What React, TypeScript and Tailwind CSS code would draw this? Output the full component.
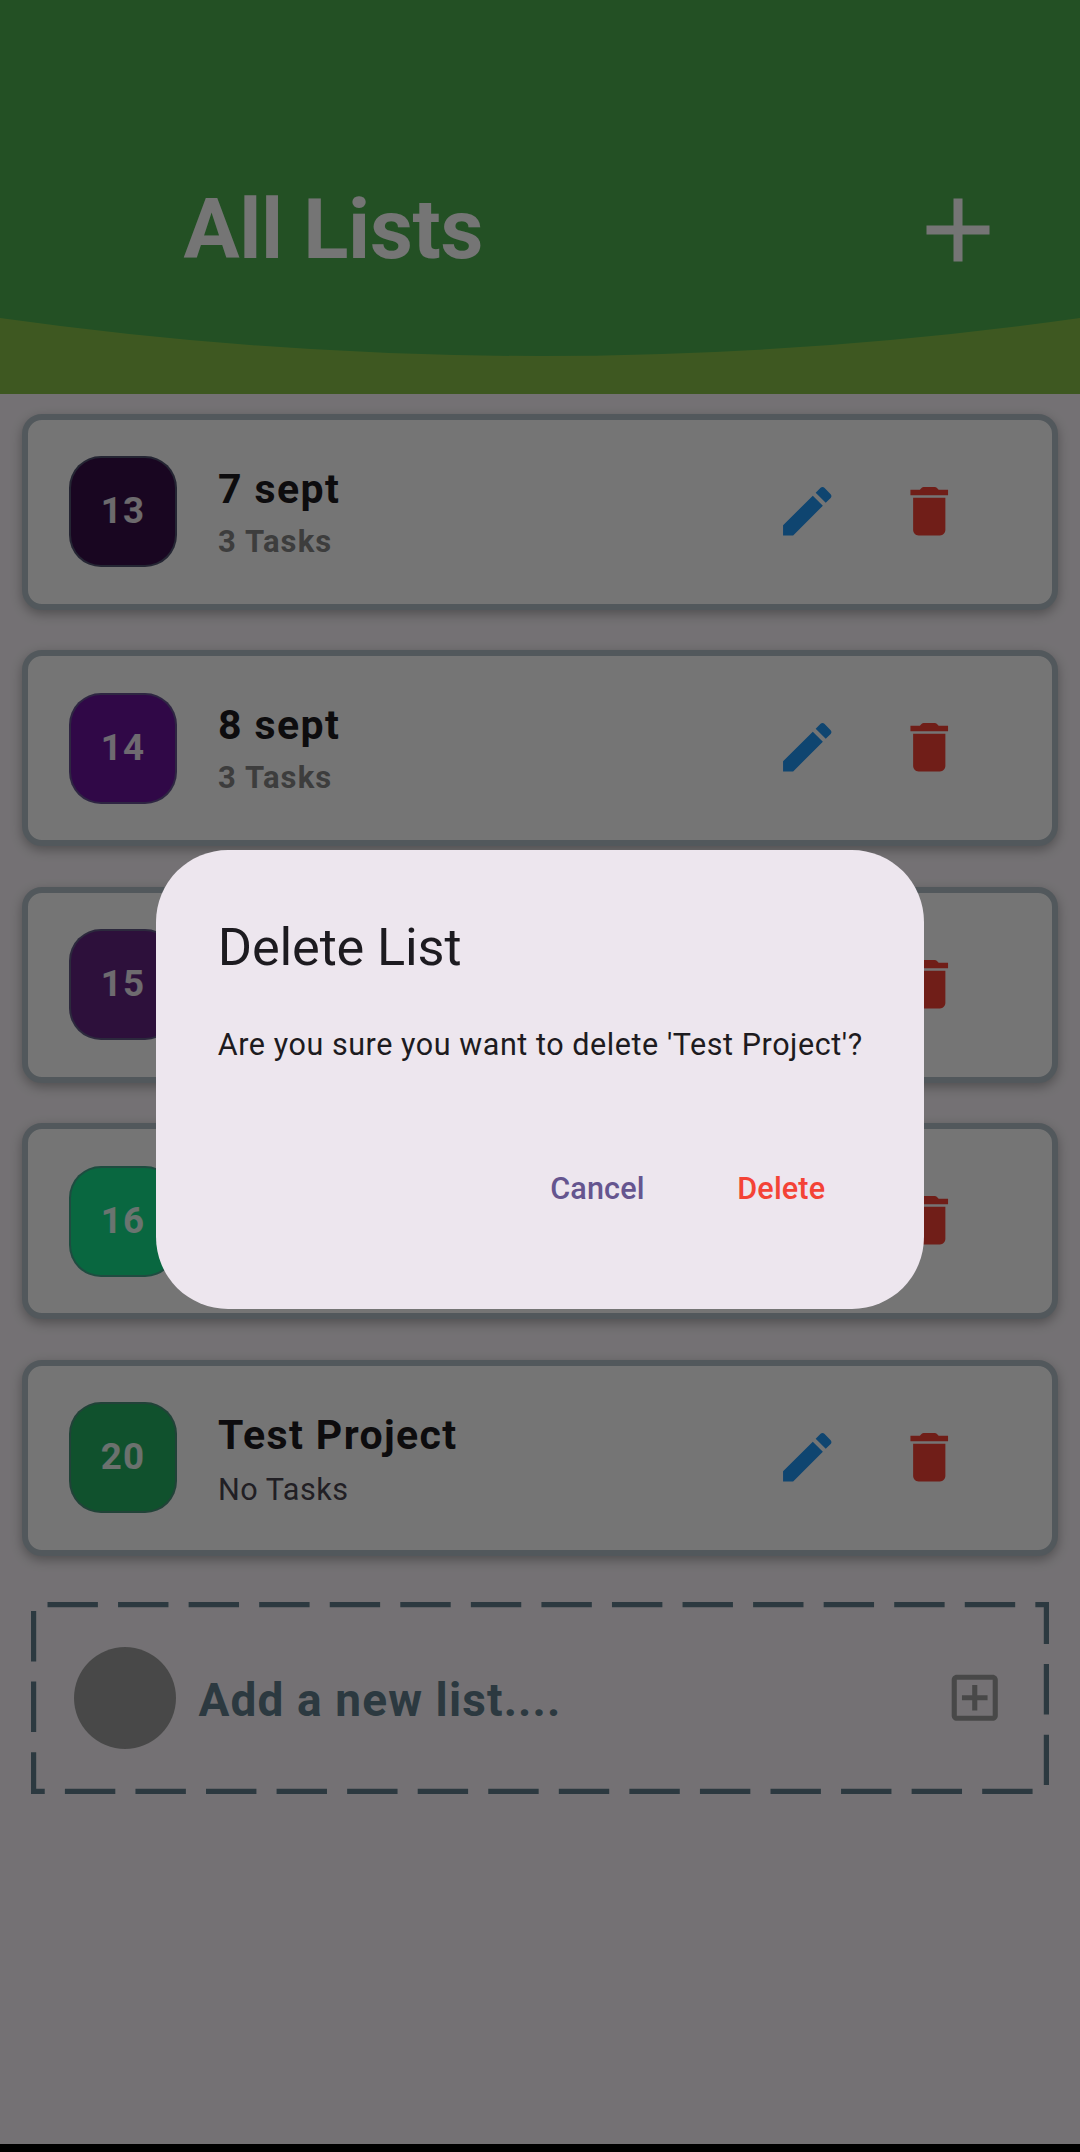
import React from "react";

type List = {
  badge: string;
  color: string;
  title?: string;
  subtitle?: string;
  empty?: boolean;
};

const lists: List[] = [
  { badge: "13", color: "bg-[#380f48]", title: "7 sept", subtitle: "3 Tasks" },
  { badge: "14", color: "bg-[#6a129c]", title: "8 sept", subtitle: "3 Tasks" },
  { badge: "15", color: "bg-[#622480]" },
  { badge: "16", color: "bg-[#14e08c]" },
  { badge: "20", color: "bg-[#24b062]", title: "Test Project", subtitle: "No Tasks", empty: true },
];

function Icon({ d, className }: { d: string; className: string }) {
  return (
    <svg viewBox="0 0 24 24" fill="currentColor" className={className}>
      <path d={d} />
    </svg>
  );
}

const ADD = "M19 13h-6v6h-2v-6H5v-2h6V5h2v6h6v2z";
const EDIT =
  "M3 17.25V21h3.75L17.81 9.94l-3.75-3.75L3 17.25zM20.71 7.04c.39-.39.39-1.02 0-1.41l-2.34-2.34c-.39-.39-1.02-.39-1.41 0l-1.83 1.83 3.75 3.75 1.83-1.83z";
const TRASH =
  "M6 19c0 1.1.9 2 2 2h8c1.1 0 2-.9 2-2V7H6v12zM19 4h-3.5l-.71-.71c-.18-.18-.44-.29-.7-.29H9.91c-.26 0-.52.11-.7.29L8.5 4H5v2h14V4z";
const ADD_BOX =
  "M19 3H5c-1.11 0-2 .9-2 2v14c0 1.1.89 2 2 2h14c1.1 0 2-.9 2-2V5c0-1.1-.9-2-2-2zm0 16H5V5h14v14zm-8-2h2v-4h4v-2h-4V7h-2v4H7v2h4z";

function Header() {
  return (
    <header className="relative h-[394px] shrink-0 bg-[#87c148]">
      <svg viewBox="0 0 1080 394" className="absolute inset-0 h-full w-full">
        <path d="M0 0H1080V318Q540 394 0 318Z" fill="#4caf50" />
      </svg>
      <div className="relative flex items-start justify-between pt-[176.4px] pr-[68.4px] pl-[183.4px] text-white">
        <h1 className="mt-1 text-[83.5px] leading-[100px] font-bold tracking-[-0.3px]">All Lists</h1>
        <Icon d={ADD} className="size-[108px]" />
      </div>
    </header>
  );
}

function Card({ list }: { list: List }) {
  return (
    <li className="flex h-[196px] items-center rounded-[20px] border-[6px] border-[#b4c1c8] bg-white pr-[90.5px] pl-[41px] shadow-[0_4px_12px_rgba(0,0,0,0.3)]">
      <div
        className={`flex h-[111px] w-[108px] items-center justify-center rounded-[32px] border-[2.5px] border-[#607d8b]/60 text-[36.7px] leading-none font-bold tracking-[1.3px] text-white/90 ${list.color}`}
      >
        {list.badge}
      </div>
      <div className="ml-[41px] flex-1 self-start">
        {list.title && (
          <div className="mt-[44px] text-[41px] leading-[50px] font-bold tracking-[1.4px] text-[#1d1b20]">
            {list.title}
          </div>
        )}
        {list.subtitle &&
          (list.empty ? (
            <div className="mt-[12px] text-[30.6px] leading-[36px] tracking-[0.5px] text-[#49454f]">{list.subtitle}</div>
          ) : (
            <div className="mt-[10px] text-[31px] leading-[36px] font-bold tracking-[1.1px] text-[#868686]">{list.subtitle}</div>
          ))}
      </div>
      <Icon d={EDIT} className="mb-[1px] size-[64.5px] text-[#2196f3]" />
      <Icon d={TRASH} className="mb-[1px] ml-[58px] size-[64.5px] text-[#f44336]" />
    </li>
  );
}

function AddRow() {
  return (
    <div className="relative mt-[46px] mr-[31px] ml-[31px] flex h-[192px] items-center pr-[43.5px] pl-[43px]">
      <svg viewBox="0 0 1018 192" className="absolute inset-0 h-full w-full">
        <rect
          x="2.6"
          y="2.6"
          width="1012.8"
          height="186.8"
          fill="none"
          stroke="#607d8b"
          strokeWidth="5.2"
          strokeDasharray="50.4 20.16"
          strokeDashoffset="-13.9"
        />
      </svg>
      <div className="size-[102px] rounded-full bg-[#9e9e9e]" />
      <div className="mt-[4px] ml-[22.4px] flex-1 text-[46px] leading-[56px] font-bold tracking-[1.12px] text-[#607d8b]">
        Add a new list....
      </div>
      <Icon d={ADD_BOX} className="size-[61.5px] text-[#9e9e9e]" />
    </div>
  );
}

function Dialog() {
  return (
    <div className="absolute inset-0 flex items-start justify-center bg-black/54 pt-[850.3px]">
      <div role="dialog" className="flex h-[459px] w-[767.5px] flex-col rounded-[72px] bg-[#ede6ee] px-[61.5px] text-[#1d1b20]">
        <h2 className="mt-[62px] text-[52.3px] leading-[70px] tracking-[-0.15px]">Delete List</h2>
        <p className="mt-[42px] text-[30.5px] leading-[42px] tracking-[0.56px] whitespace-nowrap">
          Are you sure you want to delete 'Test Project'?
        </p>
        <div className="mt-[102px] flex justify-end gap-[92.5px] pr-[37px] text-[30.6px] leading-[42px] font-medium tracking-[0.15px]">
          <button className="text-[#65558f]">Cancel</button>
          <button className="text-[#f44336]">Delete</button>
        </div>
      </div>
    </div>
  );
}

export default function App() {
  return (
    <div className="flex h-[2152px] w-[1080px] flex-col overflow-hidden bg-black font-['Roboto',sans-serif]">
      <div className="relative flex h-[2144px] flex-col bg-[#fcf7fc]">
        <Header />
        <ul className="mt-[19.6px] flex flex-col gap-[40.5px] px-[22px]">
          {lists.map((l) => (
            <Card key={l.badge} list={l} />
          ))}
        </ul>
        <AddRow />
        <Dialog />
      </div>
    </div>
  );
}
